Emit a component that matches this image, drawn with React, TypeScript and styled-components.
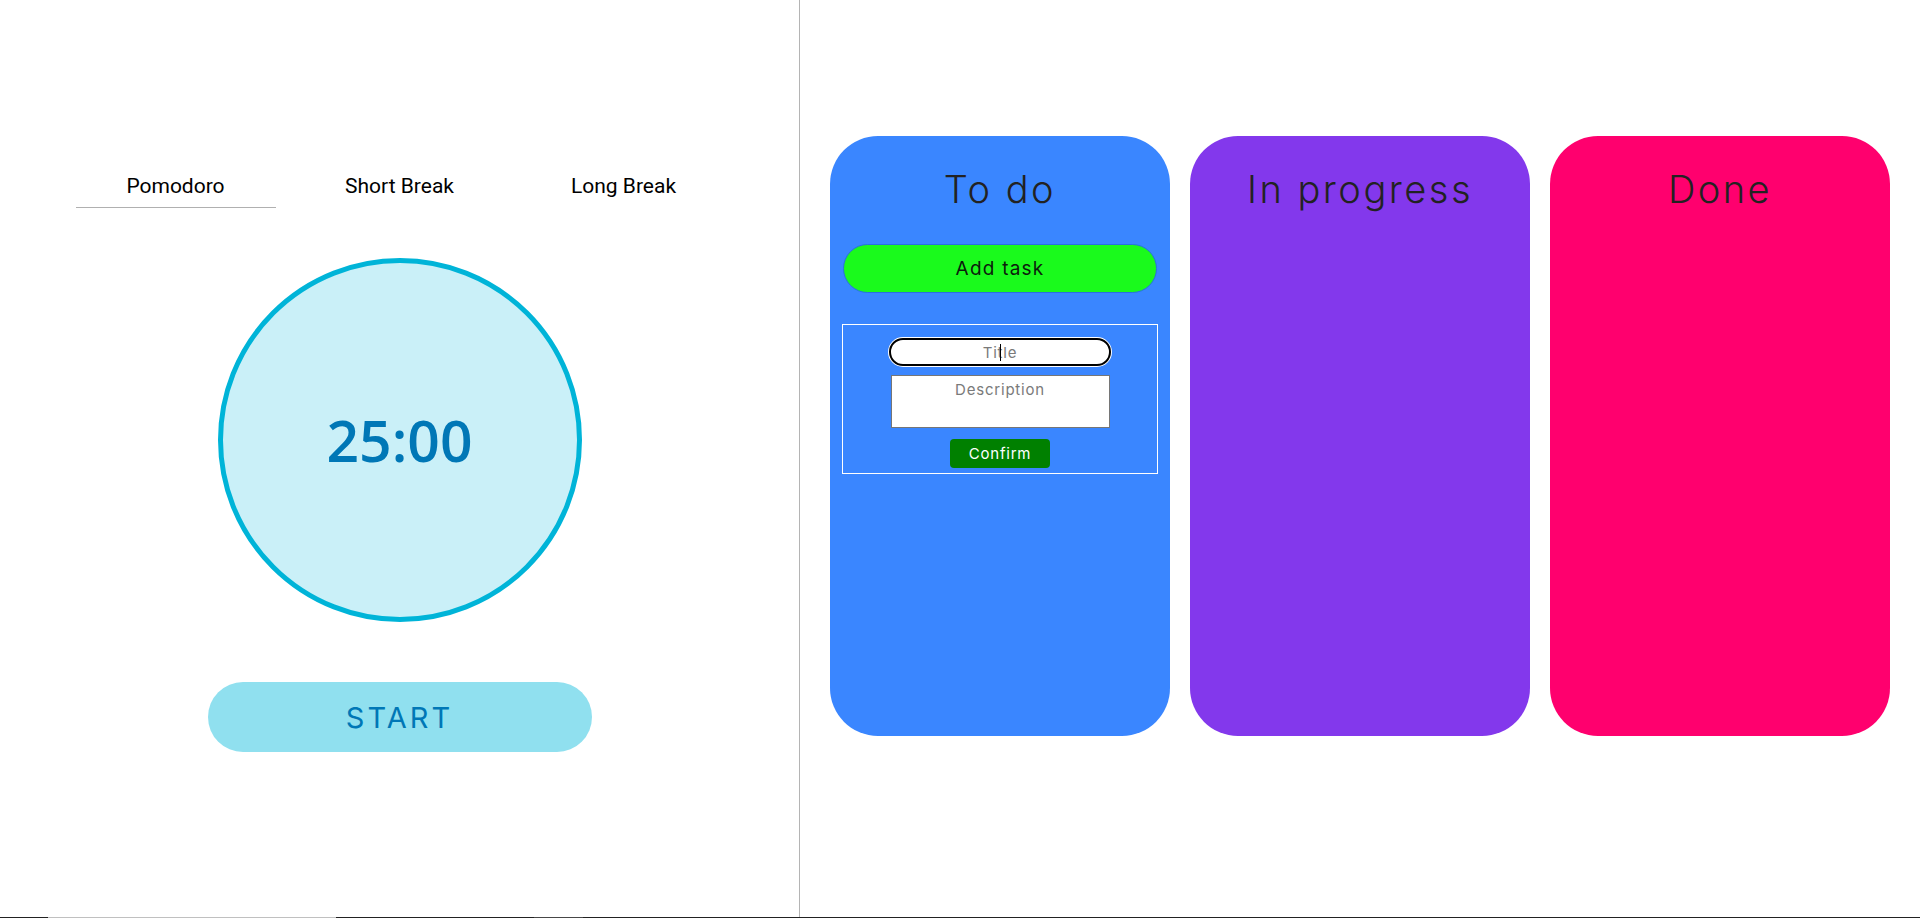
import React, { useState } from 'react';
import styled, { createGlobalStyle } from 'styled-components';

const GlobalStyle = createGlobalStyle`
    html, body {
        margin: 0;
        padding: 0;
        background: #ffffff;
        overflow: hidden;
    }
    * {
        box-sizing: border-box;
    }
`;

type Mode = 'pomodoro' | 'short' | 'long';

const modes: { key: Mode; label: string; minutes: number }[] = [
    { key: 'pomodoro', label: 'Pomodoro', minutes: 25 },
    { key: 'short', label: 'Short Break', minutes: 5 },
    { key: 'long', label: 'Long Break', minutes: 15 },
];

const columns = [
    { title: 'To do', color: '#3a86ff', withForm: true },
    { title: 'In progress', color: '#8338ec', withForm: false },
    { title: 'Done', color: '#ff006e', withForm: false },
];

const Timer: React.FC = () => {
    const [mode, setMode] = useState<Mode>('pomodoro');
    const current = modes.find(m => m.key === mode)!;
    const time = `${String(current.minutes).padStart(2, '0')}:00`;

    return (
        <SLeft>
            <STabs>
                {modes.map(m => (
                    <STab key={m.key} $active={m.key === mode} onClick={() => setMode(m.key)}>
                        {m.label}
                    </STab>
                ))}
            </STabs>
            <SCircle>
                <STime>{time}</STime>
            </SCircle>
            <SStart>START</SStart>
        </SLeft>
    );
};

const TaskForm: React.FC = () => {
    const [title, setTitle] = useState<string>('');
    const [description, setDescription] = useState<string>('');

    return (
        <SForm onSubmit={e => e.preventDefault()}>
            <STitleWrap $empty={title.length === 0}>
                <STitleInput
                    type='text'
                    placeholder='Title'
                    value={title}
                    onChange={e => setTitle(e.currentTarget.value)}
                />
            </STitleWrap>
            <STextarea
                placeholder='Description'
                value={description}
                onChange={e => setDescription(e.currentTarget.value)}
            />
            <SConfirm type='submit'>Confirm</SConfirm>
        </SForm>
    );
};

const Board: React.FC = () => {
    return (
        <SRight>
            {columns.map(col => (
                <SColumn key={col.title} $color={col.color}>
                    <SColumnTitle>{col.title}</SColumnTitle>
                    {col.withForm && (
                        <>
                            <SAddTask>Add task</SAddTask>
                            <TaskForm />
                        </>
                    )}
                </SColumn>
            ))}
        </SRight>
    );
};

const App: React.FC = () => {
    return (
        <>
            <GlobalStyle />
            <SPage>
                <Timer />
                <Board />
            </SPage>
            <SBottomStrip />
        </>
    );
};

export default App;

const SPage = styled.div`
    display: flex;
    height: 917px;
`;

const SLeft = styled.section`
    width: 800px;
    flex-shrink: 0;
    border-right: 1px solid #b4b4b4;
    display: flex;
    flex-direction: column;
    align-items: center;
    padding-top: 164px;
`;

const STabs = styled.div`
    display: flex;
    gap: 24px;
`;

const STab = styled.button<{ $active: boolean }>`
    width: 200px;
    height: 44px;
    padding: 0;
    background: none;
    border: none;
    border-bottom: 1px solid ${p => (p.$active ? '#b0b0b0' : 'transparent')};
    font-family: Roboto, 'Liberation Sans', sans-serif;
    font-size: 21px;
    color: #000;
    cursor: pointer;
`;

const SCircle = styled.div`
    margin-top: 50px;
    width: 364px;
    height: 364px;
    border-radius: 50%;
    border: 5px solid #00b4d8;
    background: #caf0f8;
    display: flex;
    align-items: center;
    justify-content: center;
`;

const STime = styled.div`
    font-family: 'Open Sans', 'Noto Sans', sans-serif;
    font-size: 57px;
    font-weight: 600;
    color: #0077b6;
`;

const SStart = styled.button`
    margin-top: 60px;
    width: 384px;
    height: 70px;
    border: none;
    border-radius: 35px;
    background: #90e0ef;
    color: #0077b6;
    font-family: Inter, 'DejaVu Sans', sans-serif;
    font-size: 29px;
    font-weight: 400;
    letter-spacing: 3px;
    cursor: pointer;
`;

const SRight = styled.section`
    flex: 1;
    display: flex;
    justify-content: center;
    align-items: flex-start;
    gap: 20px;
    padding-top: 136px;
`;

const SColumn = styled.div<{ $color: string }>`
    width: 340px;
    height: 600px;
    border-radius: 48px;
    background: ${p => p.$color};
    display: flex;
    flex-direction: column;
    align-items: center;
`;

const SColumnTitle = styled.h2`
    margin: 30px 0 0;
    height: 46px;
    line-height: 46px;
    font-family: Inter, 'DejaVu Sans', sans-serif;
    font-size: 38px;
    font-weight: 300;
    letter-spacing: 2.5px;
    color: #222;
`;

const SAddTask = styled.button`
    margin-top: 32px;
    width: 314px;
    height: 49px;
    border: 1px solid #2a6fe0;
    border-radius: 25px;
    background: #1afa1c;
    color: #0c1d0c;
    font-family: Inter, 'DejaVu Sans', sans-serif;
    font-size: 19px;
    letter-spacing: 1.2px;
    cursor: pointer;
`;

const SForm = styled.form`
    margin-top: 31px;
    width: 316px;
    height: 150px;
    border: 1px solid #ffffff;
    display: flex;
    flex-direction: column;
    align-items: center;
    padding-top: 13px;
`;

const STitleWrap = styled.span<{ $empty: boolean }>`
    position: relative;
    display: block;
    &::after {
        content: '';
        display: ${p => (p.$empty ? 'block' : 'none')};
        position: absolute;
        left: 50%;
        top: 6px;
        width: 1px;
        height: 17px;
        background: #000;
    }
`;

const STitleInput = styled.input`
    width: 222px;
    height: 28px;
    border: 2px solid #000;
    border-radius: 14px;
    box-shadow: 0 0 0 1px #fff;
    outline: none;
    background: #fff;
    text-align: center;
    font-family: Inter, 'DejaVu Sans', sans-serif;
    font-size: 15px;
    letter-spacing: 0.8px;
    &::placeholder {
        color: #7a7a7a;
    }
`;

const STextarea = styled.textarea`
    margin-top: 9px;
    width: 219px;
    height: 53px;
    border: 1px solid #767676;
    background: #fff;
    resize: none;
    text-align: center;
    padding: 4px 2px 2px;
    font-family: Inter, 'DejaVu Sans', sans-serif;
    font-size: 15px;
    letter-spacing: 0.8px;
    &::placeholder {
        color: #7a7a7a;
    }
`;

const SConfirm = styled.button`
    margin-top: 11px;
    width: 100px;
    height: 29px;
    border: none;
    border-radius: 4px;
    background: #008000;
    color: #fff;
    font-family: Inter, 'DejaVu Sans', sans-serif;
    font-size: 15px;
    letter-spacing: 0.8px;
    cursor: pointer;
`;

const SBottomStrip = styled.div`
    height: 1px;
    background: linear-gradient(
        to right,
        #222 0 48px,
        #c0c0c0 48px 336px,
        #222 336px 534px,
        #484848 534px 583px,
        #222 583px
    );
`;
